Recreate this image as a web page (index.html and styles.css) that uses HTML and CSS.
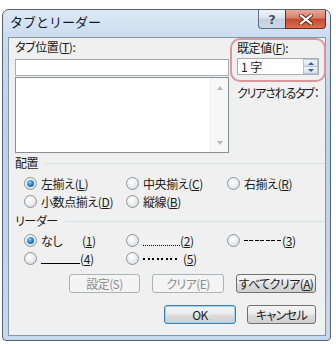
FILE: index.html
```html
<!DOCTYPE html>
<html lang="ja">
<head>
    <meta charset="UTF-8">
    <title>タブとリーダー</title>
    <link rel="stylesheet" href="styles.css">
</head>
<body>
    <div class="window">
        <div class="titlebar">
            <span class="title">タブとリーダー</span>
            <div class="caption">
                <button class="cap help">?</button>
                <button class="cap close">
                    <svg width="14" height="11" viewBox="0 0 14 11">
                        <path d="M2 1.5 L12 9.5 M12 1.5 L2 9.5" stroke="#5a2318" stroke-width="4" stroke-linecap="square"/>
                        <path d="M2 1.5 L12 9.5 M12 1.5 L2 9.5" stroke="#ffffff" stroke-width="2.2" stroke-linecap="square"/>
                    </svg>
                </button>
            </div>
        </div>
        <div class="client">
            <div class="top">
                <div class="stops">
                    <div class="label">タブ位置(<u>T</u>):</div>
                    <div class="field"></div>
                    <div class="list">
                        <div class="scroll">
                            <span class="arrow up"></span>
                            <span class="arrow down"></span>
                        </div>
                    </div>
                </div>
                <div class="side">
                    <div class="mark">
                        <div class="label">既定値(<u>F</u>):</div>
                        <div class="spin">
                            <span class="value">1 字</span>
                            <span class="spinbtns">
                                <span class="sb"><i class="tri up"></i></span>
                                <span class="sb"><i class="tri down"></i></span>
                            </span>
                        </div>
                    </div>
                    <div class="cleared">クリアされるタブ：</div>
                </div>
            </div>

            <div class="group">配置</div>
            <div class="radios">
                <label class="opt"><span class="radio on"></span>左揃え(<u>L</u>)</label>
                <label class="opt"><span class="radio"></span>中央揃え(<u>C</u>)</label>
                <label class="opt"><span class="radio"></span>右揃え(<u>R</u>)</label>
                <label class="opt"><span class="radio"></span>小数点揃え(<u>D</u>)</label>
                <label class="opt"><span class="radio"></span>縦線(<u>B</u>)</label>
            </div>

            <div class="group">リーダー</div>
            <div class="radios">
                <label class="opt"><span class="radio on"></span><span class="none">なし</span>(<u>1</u>)</label>
                <label class="opt"><span class="radio"></span><span class="leader fine"></span>(<u>2</u>)</label>
                <label class="opt"><span class="radio"></span><span class="leader dash"></span>(<u>3</u>)</label>
                <label class="opt"><span class="radio"></span><span class="leader under"></span>(<u>4</u>)</label>
                <label class="opt"><span class="radio"></span><span class="leader dots"></span>(<u>5</u>)</label>
            </div>

            <div class="actions">
                <button class="btn w71" disabled>設定(S)</button>
                <button class="btn w72" disabled>クリア(E)</button>
                <button class="btn w80">すべてクリア(<u>A</u>)</button>
            </div>
            <div class="actions final">
                <button class="btn default w72">OK</button>
                <button class="btn w69">キャンセル</button>
            </div>
        </div>
    </div>
</body>
</html>
```

FILE: styles.css
```css
body {
    margin: 0;
    background: #ffffff;
    font-family: "Noto Sans CJK JP", "Noto Sans", sans-serif;
    font-size: 12px;
    font-feature-settings: "palt";
    letter-spacing: -0.4px;
    color: #1a1a1a;
}
u {
    text-decoration: underline;
    text-underline-offset: 1px;
}
.window {
    box-sizing: border-box;
    width: 329px;
    height: 332px;
    margin: 9px 0 0 2px;
    padding: 0 4px 4px 5px;
    border: 1px solid #57626f;
    border-radius: 7px 7px 4px 4px;
    background: linear-gradient(to bottom, #dde8f4 0, #c9dbef 30px, #bcd2eb 120px, #c4d8ee 100%);
}
.titlebar {
    display: flex;
    justify-content: space-between;
    align-items: flex-start;
    height: 27px;
}
.title {
    padding: 3px 0 0 2px;
    font-size: 13px;
    line-height: 18px;
    letter-spacing: 0;
    color: #0b1a2b;
    font-feature-settings: normal;
}
.caption {
    display: flex;
}
.cap {
    height: 19px;
    border: 1px solid #5c6b7d;
    border-top: none;
    padding: 0;
    display: flex;
    align-items: center;
    justify-content: center;
}
.help {
    width: 27px;
    border-radius: 0 0 0 4px;
    border-right: none;
    background: linear-gradient(to bottom, #eef3f9 0, #dbe5f0 45%, #c2cfde 50%, #cbd8e7 100%);
    font-family: "DejaVu Sans", sans-serif;
    font-size: 13px;
    font-weight: bold;
    color: #3f4f62;
    text-shadow: 0 0 2px #ffffff;
}
.close {
    width: 41px;
    border-color: #6e2a20;
    border-radius: 0 0 4px 0;
    background: linear-gradient(to bottom, #e9a896 0, #d9806c 45%, #c6492f 50%, #d8704f 100%);
}
.client {
    box-sizing: border-box;
    height: 299px;
    border: 1px solid #8497ad;
    background: #f0f0f0;
    padding: 0 0 0 6px;
}
.top {
    display: flex;
    align-items: flex-start;
}
.stops {
    flex: none;
    width: 214px;
}
.label {
    line-height: 16px;
    margin-top: 1px;
    margin-bottom: 4px;
    white-space: nowrap;
}
.field {
    box-sizing: border-box;
    height: 17px;
    border: 1px solid #abadb3;
    border-top-color: #a0a3aa;
    background: #ffffff;
    margin-bottom: 1px;
}
.list {
    box-sizing: border-box;
    height: 76px;
    border: 1px solid #8a8f97;
    background: #ffffff;
    display: flex;
    justify-content: flex-end;
}
.scroll {
    width: 17px;
    background: #f7f7f7;
    border-left: 1px solid #efefef;
    display: flex;
    flex-direction: column;
    justify-content: space-between;
    align-items: center;
    padding: 8px 0 7px;
}
.arrow {
    width: 0;
    height: 0;
    border-left: 3px solid transparent;
    border-right: 3px solid transparent;
}
.arrow.up {
    border-bottom: 4px solid #b8b8b8;
}
.arrow.down {
    border-top: 4px solid #b8b8b8;
}
.side {
    flex: none;
    width: 96px;
    margin-left: 1px;
}
.mark {
    box-sizing: border-box;
    width: 96px;
    height: 44px;
    border: 2px solid #d9979a;
    border-radius: 10px;
    padding: 0 0 0 5px;
}
.mark .label {
    margin: 0 0 2px;
}
.spin {
    box-sizing: border-box;
    width: 82px;
    height: 17px;
    border: 1px solid #abadb3;
    background: #ffffff;
    display: flex;
    justify-content: space-between;
    align-items: center;
}
.value {
    padding-left: 3px;
    line-height: 15px;
    letter-spacing: 0;
}
.spinbtns {
    display: flex;
    flex-direction: column;
    width: 15px;
    height: 15px;
}
.sb {
    flex: 1;
    background: linear-gradient(to bottom, #f2f5fa, #d6e0ec);
    border: 1px solid #b7c4d5;
    display: flex;
    align-items: center;
    justify-content: center;
}
.sb + .sb {
    border-top: none;
}
.tri {
    width: 0;
    height: 0;
    border-left: 3px solid transparent;
    border-right: 3px solid transparent;
}
.tri.up {
    border-bottom: 3px solid #3e5f9e;
}
.tri.down {
    border-top: 3px solid #3e5f9e;
}
.cleared {
    line-height: 16px;
    margin: 3px -12px 0 7px;
    white-space: nowrap;
    letter-spacing: -1.2px;
}
.group {
    display: flex;
    align-items: center;
    line-height: 16px;
    margin-top: 2px;
}
.group::after {
    content: "";
    flex: 1;
    height: 1px;
    margin-left: 7px;
    background: #d9dfe4;
}
.radios + .group {
    margin-top: 3px;
}
.radios {
    display: grid;
    grid-template-columns: 102px 101px auto;
    grid-auto-rows: 18px;
    padding-left: 9px;
    margin-top: 2px;
}
.group:nth-of-type(2) + .radios {
    margin-top: 3px;
}
.opt {
    display: flex;
    align-items: center;
    white-space: nowrap;
}
.radio {
    box-sizing: border-box;
    width: 13px;
    height: 13px;
    border-radius: 50%;
    border: 1px solid #8e9397;
    background: radial-gradient(circle at 40% 35%, #ffffff 0, #eeeeee 45%, #cfd3d6 100%);
    margin-right: 4px;
    display: flex;
    align-items: center;
    justify-content: center;
}
.radio.on::after {
    content: "";
    width: 7px;
    height: 7px;
    border-radius: 50%;
    background: radial-gradient(circle at 40% 35%, #8fd3ff 0, #2a86d2 45%, #0c4f91 100%);
}
.none {
    display: inline-block;
    width: 41px;
}
.leader {
    display: inline-block;
    width: 37px;
    height: 12px;
    background-repeat: no-repeat;
}
.leader.fine {
    background-image: repeating-linear-gradient(to right, #000 0 1px, transparent 1px 2px);
    background-size: 37px 1px;
    background-position: 0 11px;
}
.leader.dash {
    width: 38px;
    background-image: repeating-linear-gradient(to right, #000 0 4px, transparent 4px 5.5px);
    background-size: 38px 1px;
    background-position: 0 6px;
}
.leader.under {
    width: 39px;
    background-image: linear-gradient(#000, #000);
    background-size: 39px 1px;
    background-position: 0 11px;
}
.leader.dots {
    width: 40px;
    background-image: repeating-linear-gradient(to right, #000 0 2px, transparent 2px 4.5px);
    background-size: 36px 2px;
    background-position: 0 6px;
}
.actions {
    display: flex;
    justify-content: flex-end;
    gap: 12px;
    padding-right: 9px;
    margin-top: 7px;
}
.actions.final {
    gap: 11px;
    margin-top: 12px;
}
.btn {
    box-sizing: border-box;
    height: 19px;
    padding: 0;
    border: 1px solid #707070;
    border-radius: 3px;
    background: linear-gradient(to bottom, #f4f4f4 0, #ebebeb 48%, #dddddd 52%, #cfcfcf 100%);
    font-family: inherit;
    font-size: 12px;
    font-feature-settings: "palt";
    line-height: 16px;
    color: #1a1a1a;
    white-space: nowrap;
    letter-spacing: -0.6px;
}
.btn:disabled {
    border-color: #adb2b5;
    background: #f4f4f4;
    color: #8d8d8d;
}
.btn.default {
    border-color: #3c7fb1;
    box-shadow: inset 0 0 0 1px #9ed4f1;
}
.w69 { width: 69px; }
.w71 { width: 71px; }
.w72 { width: 72px; }
.w80 { width: 80px; }
```
